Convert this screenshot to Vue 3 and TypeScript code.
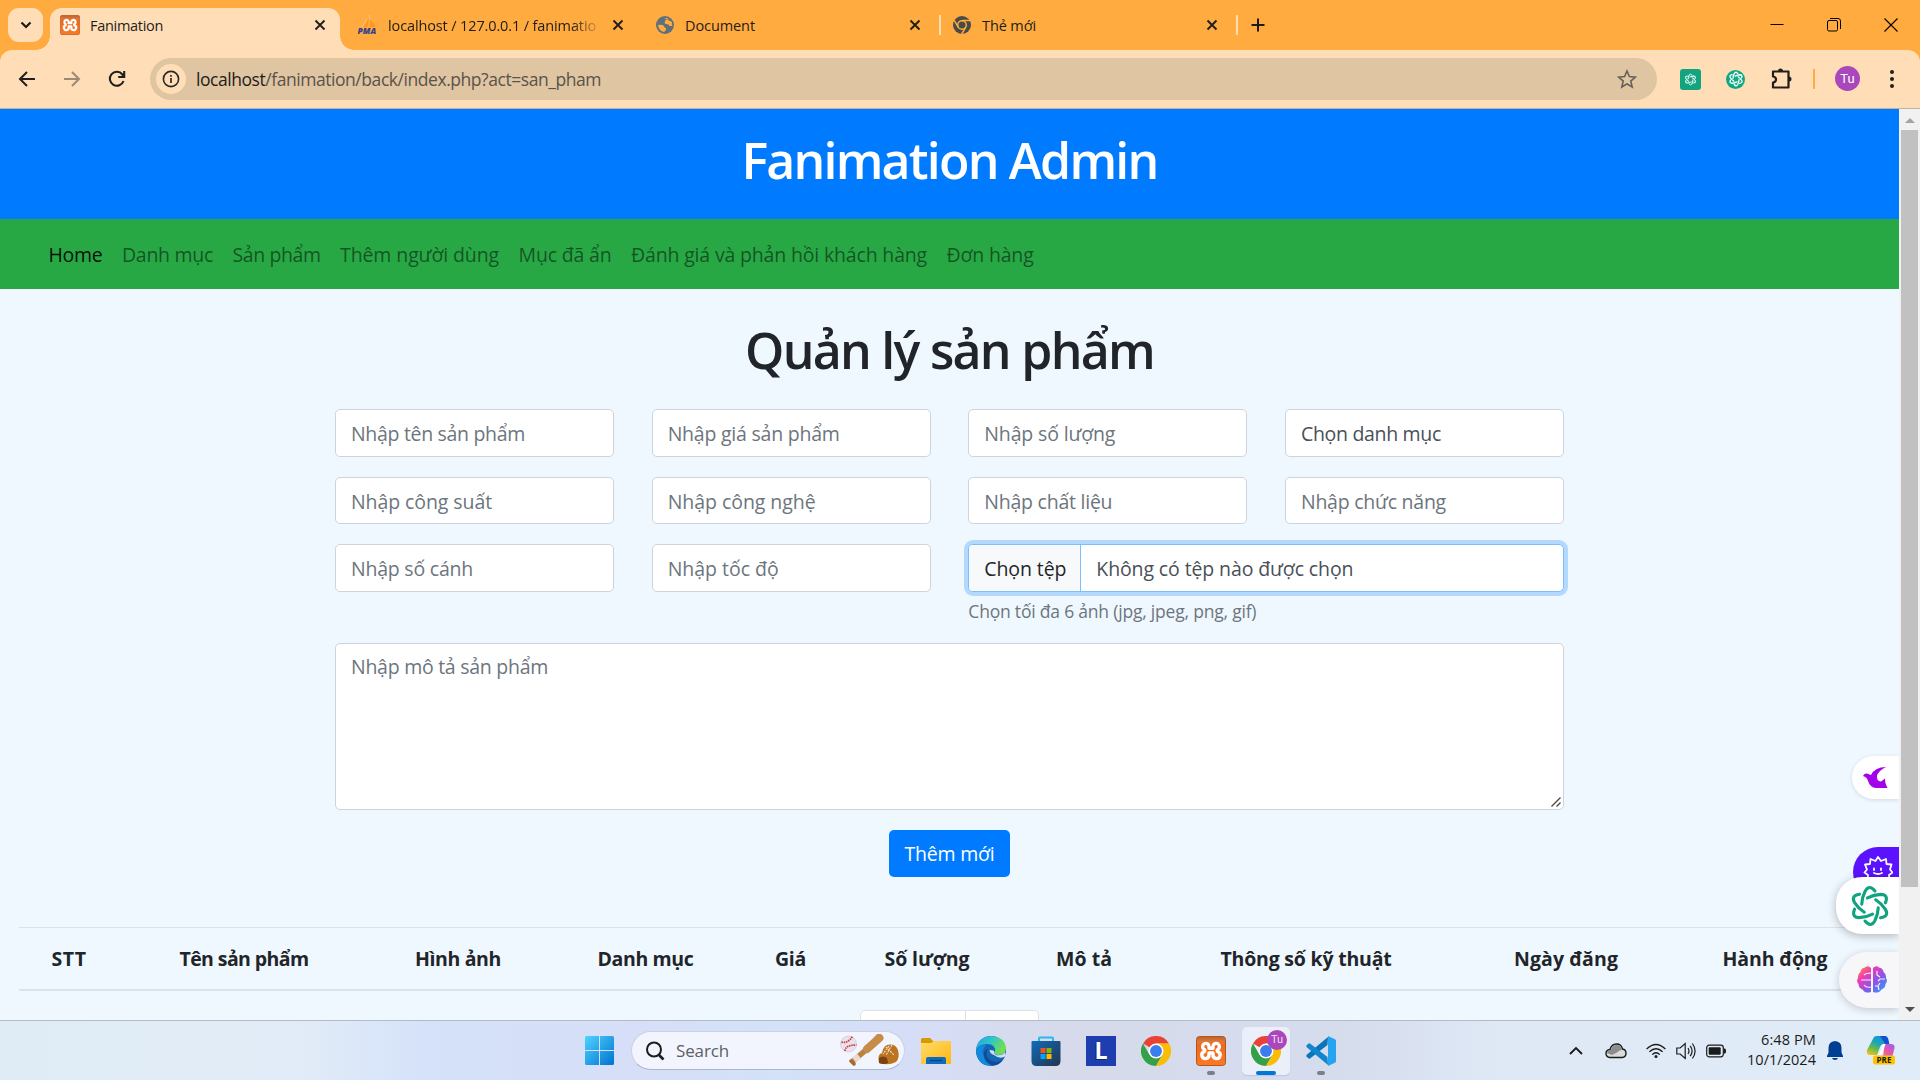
<script setup lang="ts">
import type { Directive } from 'vue'

type Fitted = HTMLElement & { placeholder?: string }

// Tracks text so that its advance equals the given width in pixels.
const vFit: Directive<Fitted, number> = {
  mounted(el, { value }) {
    const ctx = document.createElement('canvas').getContext('2d')
    if (!ctx) return
    const cs = getComputedStyle(el)
    ctx.font = `${cs.fontWeight} ${cs.fontSize} ${cs.fontFamily}`
    const text = el.placeholder || (el.textContent ?? '').trim()
    const gap = (value - ctx.measureText(text).width) / text.length
    el.style.letterSpacing = `${gap.toFixed(3)}px`
  },
}

interface Label { text: string; w: number }

const tabs = [
  { icon: 'xampp', text: 'Fanimation', w: 73 },
  { icon: 'pma', text: 'localhost / 127.0.0.1 / fanimatio', w: 208 },
  { icon: 'globe', text: 'Document', w: 70 },
  { icon: 'chromeGray', text: 'Thẻ mới', w: 54 },
]

const nav: Label[] = [
  { text: 'Home', w: 54 },
  { text: 'Danh mục', w: 91 },
  { text: 'Sản phẩm', w: 88 },
  { text: 'Thêm người dùng', w: 159 },
  { text: 'Mục đã ẩn', w: 93 },
  { text: 'Đánh giá và phản hồi khách hàng', w: 296 },
  { text: 'Đơn hàng', w: 87 },
]

const fields: Label[] = [
  { text: 'Nhập tên sản phẩm', w: 174 },
  { text: 'Nhập giá sản phẩm', w: 172 },
  { text: 'Nhập số lượng', w: 131 },
  { text: 'Chọn danh mục', w: 140 },
  { text: 'Nhập công suất', w: 141 },
  { text: 'Nhập công nghệ', w: 148 },
  { text: 'Nhập chất liệu', w: 128 },
  { text: 'Nhập chức năng', w: 145 },
  { text: 'Nhập số cánh', w: 122 },
  { text: 'Nhập tốc độ', w: 111 },
]

const columns: Label[] = [
  { text: 'STT', w: 35 },
  { text: 'Tên sản phẩm', w: 129 },
  { text: 'Hình ảnh', w: 86 },
  { text: 'Danh mục', w: 96 },
  { text: 'Giá', w: 31 },
  { text: 'Số lượng', w: 85 },
  { text: 'Mô tả', w: 56 },
  { text: 'Thông số kỹ thuật', w: 171 },
  { text: 'Ngày đăng', w: 104 },
  { text: 'Hành động', w: 105 },
]
</script>

<template>
  <div class="screen">
    <svg class="defs" width="0" height="0">
      <defs>
        <linearGradient id="xg" x1="0" y1="0" x2="0" y2="1"><stop offset="0" stop-color="#b9622b" /><stop offset=".18" stop-color="#e0793a" /><stop offset=".3" stop-color="#ef6a1c" /><stop offset="1" stop-color="#f97a26" /></linearGradient>
        <linearGradient id="win" x1="0" y1="0" x2="1" y2="1"><stop offset="0" stop-color="#4fd3ff" /><stop offset="1" stop-color="#0072d0" /></linearGradient>
        <linearGradient id="fold" x1="0" y1="0" x2="1" y2="1"><stop offset="0" stop-color="#ffdc6b" /><stop offset="1" stop-color="#ffb70f" /></linearGradient>
        <linearGradient id="edgeA" x1="0" y1="0" x2="1" y2=".4"><stop offset="0" stop-color="#2a9fe0" /><stop offset=".5" stop-color="#2fc3cf" /><stop offset="1" stop-color="#6fe04e" /></linearGradient>
        <linearGradient id="store" x1="0" y1="0" x2="1" y2="1"><stop offset="0" stop-color="#0d6cb9" /><stop offset="1" stop-color="#27344f" /></linearGradient>
        <linearGradient id="brain" x1="0" y1="0" x2="1" y2="1"><stop offset="0" stop-color="#ff9a1f" /><stop offset=".3" stop-color="#f23bb4" /><stop offset=".6" stop-color="#8a55e8" /><stop offset="1" stop-color="#1fa8ff" /></linearGradient>
        <linearGradient id="copA" x1=".6" y1="0" x2=".1" y2="1"><stop offset="0" stop-color="#1591e0" /><stop offset=".35" stop-color="#1aa6b8" /><stop offset=".65" stop-color="#6cb84a" /><stop offset="1" stop-color="#f7c713" /></linearGradient>
        <linearGradient id="copB" x1="1" y1="0" x2="0" y2="1"><stop offset="0" stop-color="#a05cf0" /><stop offset=".5" stop-color="#e657a9" /><stop offset="1" stop-color="#ff8a5c" /></linearGradient>
      </defs>
      <symbol id="xampp" viewBox="0 0 30 30">
        <rect x=".5" y=".5" width="29" height="29" rx="3" fill="url(#xg)" stroke="#b4561c" />
        <path d="M13 12.300V10.600a3.200 3.200 0 1 0-4.800 2.800q1.400 1.100 0 2.200A3.600 3.600 0 1 0 13 18.700V17h4v1.700a3.600 3.600 0 1 0 4.800-3.100q-1.400-1.100 0-2.200A3.200 3.200 0 1 0 17 10.600v1.700z" fill="none" stroke="#fff" stroke-width="3.400" stroke-linejoin="round" />
      </symbol>
      <symbol id="chrome" viewBox="0 0 48 48">
        <path d="M24 24 3.2 12A24 24 0 0 1 44.8 12L24 12z" fill="#ea4335" />
        <path d="M3.2 12A24 24 0 0 0 24 48L34.4 30 24 24 13.6 30z" fill="#34a047" />
        <path d="M24 48A24 24 0 0 0 44.8 12H24v12l10.4 6z" fill="#fbbc05" />
        <circle cx="24" cy="24" r="12" fill="#fff" /><circle cx="24" cy="24" r="9.5" fill="#3b7ded" />
      </symbol>
      <symbol id="knot" viewBox="-12 -12 24 24">
        <g fill="none" stroke="currentColor" stroke-linecap="round">
          <path v-for="a in 6" :key="a" :transform="`rotate(${a * 60})`" d="M-4.500-1Q-4.300-5-2.600-8.200-.400-12 2.700-8.200" />
        </g>
      </symbol>
    </svg>

    <header class="tabstrip">
      <button class="tabsearch"><svg width="14" height="14" viewBox="0 0 14 14"><path d="m2.5 4.5 4.5 4.5 4.5-4.5" fill="none" stroke="#1c1b1a" stroke-width="2.2" /></svg></button>
      <div v-for="(t, i) in tabs" :key="t.text" class="tab" :class="{ active: i === 0, ruled: i > 1 }">
        <svg v-if="t.icon === 'xampp'" class="fav" width="20" height="20"><use href="#xampp" /></svg>
        <svg v-else-if="t.icon === 'pma'" class="fav" width="20" height="20" viewBox="0 0 20 20">
          <path d="M10 3q1 4-.5 9H5q4-3 5-9zM11.500 5q5 2 6 7H11.500q2-3 0-7z" fill="#ff961f" /><path d="M9 4 4 12M11 0l1 4" stroke="#ffc57c" fill="none" />
          <text x="-.4" y="19" font-family="Open Sans, sans-serif" font-weight="800" font-style="italic" font-size="8.4" fill="#34418d">PMA</text>
        </svg>
        <svg v-else-if="t.icon === 'globe'" class="fav" width="20" height="20" viewBox="0 0 20 20">
          <circle cx="10" cy="10" r="9" fill="#5f6f7c" /><path d="M3 10q4-1 6 1 0 2 2 2v2q-1 1-2 2-5-1-6-7zM9 3q4 0 5 1-3 0-4 2-1 3 1 3 3 0 3.500 2h3q-1-2-.500-4" fill="#ffab40" />
        </svg>
        <svg v-else class="fav" width="20" height="20" viewBox="0 0 20 20">
          <circle cx="10" cy="10" r="9" fill="#4a4a46" /><circle cx="10" cy="10" r="4.300" fill="none" stroke="#ffab40" stroke-width="1.500" />
          <path d="M10 5.500h8.300M6.200 12.200 2.200 5.400M13.800 12.200 9.700 19" stroke="#ffab40" stroke-width="1.500" />
        </svg>
        <span class="ttl"><span v-fit="t.w">{{ t.text }}</span></span>
        <svg class="x" width="12" height="12" viewBox="0 0 12 12"><path d="m1.500 1.500 9 9m0-9-9 9" stroke="#211f1d" stroke-width="1.900" /></svg>
      </div>
      <svg class="plus" width="14" height="14" viewBox="0 0 14 14"><path d="M7 .500v13M.500 7h13" stroke="#1c1b1a" stroke-width="2" /></svg>
      <div class="winctl">
        <svg width="14" height="14" viewBox="0 0 14 14"><path d="M.500 6.500h13" stroke="#000" /></svg>
        <svg width="14" height="14" viewBox="0 0 14 14" fill="none" stroke="#000"><rect x=".500" y="2.500" width="10" height="10.500" rx="1.500" /><path d="M3 .500h8q2.500 0 2.500 2.500v8" /></svg>
        <svg width="14" height="14" viewBox="0 0 14 14"><path d="m.500.500 13 13m0-13-13 13" stroke="#000" stroke-width="1.100" /></svg>
      </div>
    </header>

    <div class="toolbar">
      <svg class="tb" width="20" height="20" viewBox="0 0 20 20"><path d="M18 10H3m7-7-7 7 7 7" fill="none" stroke="#211f1d" stroke-width="2" /></svg>
      <svg class="tb" width="20" height="20" viewBox="0 0 20 20"><path d="M2 10h15m-7-7 7 7-7 7" fill="none" stroke="#9b8a75" stroke-width="2" /></svg>
      <svg class="tb" width="20" height="20" viewBox="0 0 20 20"><path d="M16.500 12A7 7 0 1 1 15.400 5.500L17 7.500M17.200 2v6h-6" fill="none" stroke="#211f1d" stroke-width="2.100" /></svg>
      <div class="omni">
        <span class="info"><svg width="18" height="18" viewBox="0 0 18 18"><circle cx="9" cy="9" r="7.600" fill="none" stroke="#2a2825" stroke-width="1.600" /><path d="M9 8v5M9 5v1.800" stroke="#2a2825" stroke-width="1.700" /></svg></span>
        <span v-fit="405" class="url"><b>localhost</b>/fanimation/back/index.php?act=san_pham</span>
        <svg class="star" width="20" height="20" viewBox="0 0 20 20"><path d="m10 2 2.400 5.600 6 .500-4.600 4 1.400 5.900L10 14.900 4.800 18l1.400-5.900-4.600-4 6-.500z" fill="none" stroke="#666059" stroke-width="1.600" /></svg>
      </div>
      <div class="ext">
        <span class="gpt sq"><svg width="13" height="13" stroke-width="1.800"><use href="#knot" /></svg></span>
        <span class="gpt rd"><svg width="16" height="16" stroke-width="2"><use href="#knot" /></svg></span>
        <svg class="puz" width="22" height="22" viewBox="0 0 22 22"><path d="M2 3.500h15.500v16H2v-5q3-.400 3-3t-3-3z" fill="none" stroke="#211f1d" stroke-width="2.200" stroke-linejoin="round" /><path d="M7 3a2.500 2.500 0 0 1 5 0zM18 8.500a2.500 2.500 0 0 1 0 5z" fill="#211f1d" /></svg>
        <i class="bar" />
        <span class="ava">Tu</span>
        <svg class="dots" width="6" height="20" viewBox="0 0 6 20" fill="#211f1d"><circle cx="3" cy="3" r="2" /><circle cx="3" cy="10" r="2" /><circle cx="3" cy="17" r="2" /></svg>
      </div>
    </div>

    <main class="view">
      <div class="page">
        <h1 class="brand"><span v-fit="416">Fanimation Admin</span></h1>
        <nav class="nav"><a v-for="(n, i) in nav" :key="n.text" v-fit="n.w" :class="{ on: i === 0 }">{{ n.text }}</a></nav>
        <h2 class="head"><span v-fit="409">Quản lý sản phẩm</span></h2>
        <form class="form" @submit.prevent>
          <template v-for="(f, i) in fields" :key="f.text">
            <div v-if="i === 3" class="ctl select"><span v-fit="f.w">{{ f.text }}</span></div>
            <input v-else v-fit="f.w" class="ctl" :class="{ short: i > 3 && i < 8 }" :placeholder="f.text">
          </template>
          <div class="upload">
            <div class="ctl file"><span class="pick"><span v-fit="82">Chọn tệp</span></span><span v-fit="257" class="none">Không có tệp nào được chọn</span></div>
            <small><span v-fit="288">Chọn tối đa 6 ảnh (jpg, jpeg, png, gif)</span></small>
          </div>
          <div class="desc">
            <textarea v-fit="197" class="ctl area" placeholder="Nhập mô tả sản phẩm" />
            <svg class="grip" width="12" height="12" viewBox="0 0 12 12"><path d="m1.500 10.500 9-9M6.500 10.500l4-4" stroke="#444" stroke-width="1.300" /></svg>
          </div>
          <button class="add"><span v-fit="90">Thêm mới</span></button>
        </form>
        <div class="thead"><span v-for="c in columns" :key="c.text"><span v-fit="c.w">{{ c.text }}</span></span></div>
        <div class="pager"><i /><i /></div>

        <div class="float bird"><svg width="25" height="22" viewBox="0 0 25 22"><path d="M0 9q1-3 4-2.500L8 8Q12 0 23 0q-8 4-9 9-.500 5 4 5.500l4-3q0 3 .500 4.500.500 2 2 5H13q-6-.500-8-7Q4 10 0 9z" fill="#a303e8" /></svg></div>
        <div class="float sun"><svg width="30" height="30" viewBox="0 0 30 30" fill="none" stroke="#fff" stroke-width="1.800" stroke-linejoin="round"><path d="m15 1 3 4 5-2 .500 5 5 .500-1.500 5 2.500 3-3.500 2.500.500 5-6 1-5 3-5-3-6-1 .500-5L1.500 16.500 4 13.500 2 8.500 7 8l.500-5 5 2z" /><path d="M11 12.500v1.500M18 12.500v1.500M11 17q4 2 8 0" stroke-linecap="round" /></svg></div>
        <div class="float chat"><svg width="44" height="44" stroke-width="1.700"><use href="#knot" /></svg></div>
        <div class="float mind">
          <svg width="30" height="28" viewBox="0 0 30 28"><path d="M14 2Q11-1 8 1.500 4 2 3.500 6 .500 8 1 12-1 15 1.500 18q0 4 4 5.500Q8 28 14 26zM16 2q3-3 6-.500 4 .500 4.500 4.500 3 2 2.500 6 2 3-.500 6 0 4-4 5.500Q22 28 16 26z" fill="url(#brain)" /><path d="M4 14h10M7 9q2-2 7-2M7 19q2 3 7 2M20 5v4l3 2M28 13h-5l-2 2M18 20h3l2-3m-2 3 1 4" fill="none" stroke="#f7f0fb" stroke-width="1.200" /></svg>
        </div>
      </div>
      <div class="scroll"><i class="up" /><i class="thumb" /><i class="down" /></div>
    </main>

    <footer class="taskbar">
      <svg class="start" width="29" height="29" viewBox="0 0 29 29" fill="url(#win)"><path d="M0 1.500Q0 0 1.500 0H14v14H0zM15 0h12.500Q29 0 29 1.500V14H15zM0 15h14v14H1.500Q0 29 0 27.500zM15 15h14v12.500q0 1.500-1.500 1.500H15z" /></svg>
      <div class="search">
        <svg width="20" height="20" viewBox="0 0 20 20"><circle cx="9" cy="8.500" r="7" fill="none" stroke="#1d1d1f" stroke-width="2" /><path d="m14 14 4.500 4.500" stroke="#1d1d1f" stroke-width="2.600" /></svg>
        <span v-fit="53">Search</span>
        <svg class="ball" width="60" height="32" viewBox="0 0 60 32">
          <circle cx="8.500" cy="10" r="8" fill="#e9e1ee" stroke="#c9bfd8" stroke-width=".600" /><path d="M1.500 8q6 2 11-5.500M5 17q0-6 11.500-6" fill="none" stroke="#cf3a2c" stroke-width="1.700" stroke-dasharray="1.500 .800" />
          <path d="M13 27 27 15l11-12" stroke="#b9803f" stroke-width="5.500" fill="none" stroke-linecap="round" /><path d="m27 15 12.500-11" stroke="#c68c48" stroke-width="8" stroke-linecap="round" /><path d="m14 26 5-4" stroke="#e8dcd0" stroke-width="6" /><path d="m11 27 3 3" stroke="#a66a2c" stroke-width="3.500" stroke-linecap="round" />
          <path d="M39 29q-2-9 3-10 1-6 5-8 8-2 11 5 2 8-2 12-8 4-17 1z" fill="#bd7420" /><path d="M39 24q4-3 8 0l1 5q-4 2-9 0z" fill="#7b4312" /><path d="m46 13 8 8M52 11l-6 10M49 12l-6 8" stroke="#f4e3c8" stroke-width="1.100" stroke-dasharray="2 1" />
        </svg>
      </div>
      <div class="apps">
        <span class="app"><svg width="30" height="30" viewBox="0 0 30 30"><path d="M0 3.500Q0 2 1.500 2H9l3 3h4v4H0z" fill="#d99a00" /><path d="M0 7h10l3-2h15.500Q30 5 30 6.500V28H0z" fill="url(#fold)" /><path d="M5 28v-5q0-2 2-2h16q2 0 2 2v5z" fill="#0f6cbd" /><path d="M9 24.500h12" stroke="#0a3d78" stroke-width="1.200" /></svg></span>
        <span class="app"><svg width="30" height="30" viewBox="0 0 30 30"><circle cx="15" cy="15" r="15" fill="#1467b8" /><path d="M0 14Q1 1 15 0q14 1 15 12 0 7-8 7-4-.500-3-3Q20 8 11 8 3 8 0 14z" fill="url(#edgeA)" /><path d="M10 9q-6 6-1 14 3 5 9 6.500Q2 32 0 15 3 8 10 9z" fill="#1488dc" /><path d="M12 13q-3 4 0 9 6 7 15 2-5 6-11 5.500Q7 26 8 17q1-4 4-4z" fill="#0f4d94" /><path d="M18 19q-4-1-4.500-5 5 0 5 2-.500 2 1.500 3 6 1 9-3l1 4q-6 4-12-1z" fill="#d6dcf0" /></svg></span>
        <span class="app"><svg width="30" height="30" viewBox="0 0 30 30"><path d="M8 7V2.500Q8 1.500 9 1.500h12q1 0 1 1V7" fill="none" stroke="#27b8ef" stroke-width="2" /><path d="M.500 6q0-1 1-1h27q1 0 1 1v19q0 5-5 5H5.500q-5 0-5-5z" fill="url(#store)" /><path d="M9.500 12h5v5h-5z" fill="#f25022" /><path d="M15.500 12h5v5h-5z" fill="#7fba00" /><path d="M9.500 18h5v5h-5z" fill="#00a4ef" /><path d="M15.500 18h5v5h-5z" fill="#ffb900" /></svg></span>
        <span class="app"><span class="ell">L</span></span>
        <span class="app"><svg width="30" height="30"><use href="#chrome" /></svg></span>
        <span class="app run"><svg width="30" height="30"><use href="#xampp" /></svg></span>
        <span class="app cur"><svg width="30" height="30"><use href="#chrome" /></svg><b>Tu</b></span>
        <span class="app run"><svg width="30" height="30" viewBox="0 0 30 30"><path d="m22 1-.500 8L4 22.500Q3 23 2 22l-1.500-1.500Q0 19.500 1 18.500z" fill="#0a74bd" /><path d="m22 29-.500-8L4 7.500Q3 7 2 8L.500 9.500Q0 10.500 1 11.500z" fill="#1186cf" /><path d="m22 0 7 3.200q1 .500 1 1.800v20q0 1.300-1 1.800L22 30z" fill="#25a4ef" /></svg></span>
      </div>
      <div class="tray">
        <svg width="14" height="9" viewBox="0 0 14 9"><path d="M1 8l6-6 6 6" fill="none" stroke="#1b1b1b" stroke-width="1.900" /></svg>
        <svg class="cloud" width="22" height="16" viewBox="0 0 22 16"><path d="M5 14.500Q1 14 1 10.500T5 6.500Q6.500 1 11.500 1T17.500 6q3.500.500 3.500 4.300T17 14.500z" fill="#dcdcdc" stroke="#1b1b1b" stroke-width="1.400" /><path d="M2 10q1-3 4-3 1-5 5.500-5T17 7q-3 0-5 2.500L7 12z" fill="#8d8d8d" /></svg>
        <svg class="wifi" width="20" height="16" viewBox="0 0 20 16" fill="none" stroke="#1b1b1b" stroke-width="1.300"><path d="M.600 6q9.400-9 18.800 0M3.400 8.800q6.600-6.200 13.200 0M6.200 11.600q3.800-3.600 7.600 0" /><circle cx="10" cy="13.600" r="1.500" fill="#1b1b1b" stroke="none" /></svg>
        <svg class="vol" width="20" height="18" viewBox="0 0 20 18" fill="none" stroke="#1b1b1b" stroke-width="1.200"><path d="M.800 6v6h3.400l5 4.500v-15L4.200 6zM12 6q2 3 0 6M14.200 3.800q3.800 5.200 0 10.400M16.400 1.500q5.400 7.500 0 15" /></svg>
        <svg class="bat" width="20" height="14" viewBox="0 0 20 14"><rect x=".700" y="1.200" width="16.600" height="11.600" rx="2.500" fill="none" stroke="#1b1b1b" stroke-width="1.200" /><rect x="2.700" y="3.200" width="12" height="7.600" rx="1" fill="#1b1b1b" /><path d="M18 4.500h1q1 0 1 2.500t-1 2.500h-1z" fill="#1b1b1b" /></svg>
        <div class="clock"><span v-fit="55">6:48 PM</span><span v-fit="69">10/1/2024</span></div>
        <svg class="bell" width="18" height="20" viewBox="0 0 18 20" fill="#003e92"><path d="M9 0q6.500.500 6.500 7v4.500L17 15v1H1v-1l1.500-3.500V7Q2.500.500 9 0zM6 17h6q-.500 2-3 2t-3-2z" /></svg>
        <svg class="cop" width="30" height="29" viewBox="0 0 30 29"><path d="M8 1Q9 0 11 0h7q3 0 4 4l1 4h-5q-3 0-4 3l-3 8H4Q0 19 1 14z" fill="url(#copA)" /><path d="M14 0h5q2.500 0 3.500 4l.800 4h-4z" fill="#1450cf" /><path d="M18 8h7q4 0 3.500 4l-2 8q-1 3-4 3h-9q3-1 4-5z" fill="url(#copB)" /><path d="m17 8-4 11h2q1.500-1 2-3L19.500 8z" fill="#fff" /><rect x="7" y="19.500" width="22" height="9" rx="2" fill="#fdc500" /><text x="18" y="27" text-anchor="middle" font-family="Open Sans, sans-serif" font-weight="700" font-size="8" fill="#1b1b1b">PRE</text></svg>
      </div>
    </footer>
  </div>
</template>

<style>
body { margin: 0; overflow: hidden; }
</style>

<style scoped>
* { box-sizing: border-box; }
.screen { width: 1920px; height: 1080px; display: flex; flex-direction: column; overflow: hidden; font-family: "Open Sans", "Noto Sans", sans-serif; background: #ffab40; }
.screen span, .nav a { white-space: pre; }
.defs { position: absolute; }
svg { flex: none; display: block; }

.tabstrip { height: 50px; display: flex; align-items: stretch; flex: none; }
.tabsearch { width: 35px; height: 34px; margin: 8px 7px 0 8px; border: 0; padding: 0; border-radius: 11px; background: #ffdeb7; display: flex; align-items: center; justify-content: center; }
.tab { width: 297px; height: 34px; margin-top: 8px; padding-left: 11px; display: flex; align-items: center; position: relative; color: #1f1d1a; font-size: 14.500px; }
.tab.active { width: 290px; height: 42px; margin-right: 7px; padding: 0 0 8px 10px; background: #ffdeb7; border-radius: 12px 12px 0 0; }
.tab.active::before, .tab.active::after { content: ""; position: absolute; bottom: 0; width: 14px; height: 14px; }
.tab.active::before { left: -14px; background: radial-gradient(circle at 0 0, transparent 13.500px, #ffdeb7 14px); }
.tab.active::after { right: -14px; background: radial-gradient(circle at 100% 0, transparent 13.500px, #ffdeb7 14px); }
.ttl { width: 214px; margin-left: 10px; }
.tab:nth-child(3) .ttl { mask-image: linear-gradient(90deg, #000 86%, transparent 100%); }
.x { margin-left: 10px; }
.tab.ruled::after { content: ""; position: absolute; right: 0; top: 7px; width: 2px; height: 20px; background: #ffdeb7; }
.plus { margin: 18px 0 0 13px; }
.winctl { display: flex; gap: 43px; margin: 18px 22px 0 auto; }

.toolbar { height: 59px; flex: none; display: flex; align-items: center; background: #ffdeb7; border-radius: 12px 12px 0 0; border-bottom: 1px solid #bdb3a0; padding-left: 17px; }
.tb { margin-right: 25px; }
.tb:nth-child(3) { margin-right: 23px; }
.omni { width: 1507px; height: 42px; border-radius: 21px; background: #dfc5a1; display: flex; align-items: center; padding-left: 6px; }
.info { width: 30px; height: 30px; border-radius: 50%; background: #ffdeb7; display: flex; align-items: center; justify-content: center; }
.url { margin-left: 10px; font-size: 17.500px; color: #5a534b; }
.url b { font-weight: 400; color: #1f1d1a; }
.star { margin: 0 20px 0 auto; }
.ext { display: flex; align-items: center; margin-left: 23px; }
.gpt { display: flex; align-items: center; justify-content: center; color: #fff; }
.sq { width: 21px; height: 21px; border-radius: 3px; background: #12a37f; }
.rd { width: 19px; height: 19px; border-radius: 50%; background: #0fa884; margin: 0 26px 0 25px; }
.bar { width: 2px; height: 20px; background: #ffab40; margin: 0 20px; }
.ava { width: 25px; height: 25px; border-radius: 50%; background: #ab47bc; color: #fff; font: 13px/25px Roboto, sans-serif; text-align: center; margin-top: -1px; }
.dots { margin-left: 29px; }

.view { height: 912px; flex: none; display: flex; border-bottom: 1px solid #b3bcc5; overflow: hidden; }
.page { width: 1899px; position: relative; background: #f0f8ff; color: #212529; overflow: hidden; font-size: 19.500px; }
.brand { margin: 0; height: 110px; padding-bottom: 8px; background: #007bff; color: #fff; display: flex; align-items: center; justify-content: center; font-size: 50px; font-weight: 600; }
.nav { height: 70px; background: #28a745; display: flex; align-items: center; gap: 19.500px; padding-left: 48.500px; color: rgba(0, 0, 0, .5); }
.nav .on { color: rgba(0, 0, 0, .9); }
.head { margin: 0; height: 120px; padding-top: 2px; display: flex; align-items: center; justify-content: center; font-size: 50px; font-weight: 600; }
.form { width: 1229px; margin: 0 auto; display: grid; grid-template-columns: repeat(4, 279px); column-gap: 37.670px; grid-template-rows: 48px 47px 79px 167px 47px; row-gap: 20px; }
.ctl { height: 48px; width: 100%; border: 1px solid #ced4da; border-radius: 5px; background: #fff; padding: 0 15px; font: 19.500px "Open Sans", "Noto Sans", sans-serif; color: #495057; outline: 0; }
.ctl::placeholder { color: #6c757d; opacity: 1; }
.ctl.short { height: 47px; padding-top: 2px; }
.select { display: flex; align-items: center; }
.upload { grid-column: span 2; }
.file { display: flex; align-items: center; padding: 0; border-color: #80bdff; box-shadow: 0 0 0 4px #b3d9ff; }
.pick { height: 46px; padding: 0 14px 0 15px; display: flex; align-items: center; background: #f8f9fa; color: #212529; border-right: 1px solid #80bdff; border-radius: 4px 0 0 4px; }
.none { margin-left: 15px; }
small { display: flex; align-items: center; height: 37px; font-size: 17.500px; color: #6c757d; }
.desc { grid-column: 1 / -1; position: relative; }
.area { height: 167px; padding: 9px 15px; resize: none; display: block; }
.grip { position: absolute; right: 2px; bottom: 2px; }
.add { grid-column: 1 / -1; justify-self: center; width: 121px; height: 47px; border: 0; border-radius: 5px; background: #007bff; color: #fff; font: 19.500px "Open Sans", "Noto Sans", sans-serif; padding: 0; }
.thead { margin: 50px 19px 0; height: 64px; display: grid; grid-template-columns: 100px 250px 178px 197px 93px 180px 134px 310px 210px 208px; align-items: center; text-align: center; border-top: 1px solid #dee2e6; border-bottom: 2px solid #dee2e6; font-weight: 700; }
.pager { display: flex; justify-content: center; margin-top: 19px; }
.pager i { height: 40px; background: #fff; border: 1px solid #dee2e6; width: 106px; border-radius: 5px 0 0 5px; }
.pager i + i { width: 74px; margin-left: -1px; border-radius: 0 5px 5px 0; }

.float { position: absolute; right: 0; display: flex; align-items: center; background: #fff; }
.bird { top: 647px; width: 47px; height: 43px; padding-left: 11px; border-radius: 22px 0 0 22px; box-shadow: 0 1px 4px rgba(0, 0, 0, .12); }
.sun { top: 738px; width: 46px; height: 50px; padding: 9px 0 0 10px; align-items: flex-start; border-radius: 25px 0 0 25px; background: #5b12ff; }
.chat { top: 768px; width: 63px; height: 57px; padding-left: 12px; border-radius: 26px 0 0 26px; color: #10a37f; box-shadow: 0 2px 10px rgba(0, 0, 0, .28); }
.mind { top: 843px; width: 60px; height: 56px; padding-left: 18px; border-radius: 28px 0 0 28px; background: #f7f7f9; box-shadow: 0 2px 9px rgba(0, 0, 0, .2); }

.scroll { width: 21px; background: #f1f1f1; display: flex; flex-direction: column; align-items: center; }
.up, .down { width: 0; height: 0; border: 5px solid transparent; }
.up { border-bottom-color: #a3a3a3; border-top: 0; margin-top: 9px; }
.thumb { width: 17px; height: 757px; margin-top: 7px; background: #c1c1c1; }
.down { border-top-color: #505050; border-bottom: 0; margin: auto 0 8px; }

.taskbar { height: 59px; flex: none; display: flex; align-items: center; background: linear-gradient(90deg, #dfecf5 0, #e2ecf8 300px, #d5e2f9 420px, #d6dff7 640px, #d3e2f9 780px, #d6ddf6 910px, #d6daea 1080px, #d6dcee 1240px, #d5dcec 1340px, #dfe9f6 1500px, #e0ecf8 1920px); padding-left: 585px; }
.search { width: 274px; height: 39px; margin-left: 17px; border-radius: 20px; background: #f2f5fd; border: 1px solid #c9d2e6; border-bottom-color: #aab6cb; display: flex; align-items: center; padding-left: 13px; font-size: 17px; color: #5d5f63; }
.search > span { margin-left: 11px; }
.ball { margin: -1px 4px 0 auto; }
.apps { display: flex; gap: 7px; margin-left: 7px; }
.app { width: 48px; height: 48px; position: relative; display: flex; align-items: center; justify-content: center; border-radius: 5px; }
.ell { width: 30px; height: 30px; background: #1e3eaf; color: #fff; font: 700 23px/28px "Open Sans", sans-serif; text-align: center; text-shadow: -1px 1px #12276f; }
.run::after, .cur::after { content: ""; position: absolute; bottom: 0; left: 50%; width: 8px; height: 4px; margin-left: -4px; border-radius: 2px; background: #7c7f88; }
.cur { background: #eaeff9; box-shadow: 0 1px 1px #bfc6d8; }
.cur::after { width: 20px; margin-left: -10px; background: #0078d7; }
.cur b { position: absolute; left: 25px; top: 3px; width: 20px; height: 20px; border-radius: 50%; background: #ab47bc; color: #f3dff6; font: 11px/20px Roboto, sans-serif; text-align: center; }
.tray { margin-left: auto; display: flex; align-items: center; padding-right: 24px; }
.cloud { margin-left: 22px; }
.wifi { margin-left: 19px; }
.vol { margin-left: 10px; }
.bat { margin-left: 10px; }
.clock { width: 90px; margin-bottom: 2px; display: flex; flex-direction: column; align-items: flex-end; font-size: 14.500px; line-height: 20px; color: #1b1b1b; }
.bell { margin-left: 10px; }
.cop { margin-left: 22px; }
</style>
